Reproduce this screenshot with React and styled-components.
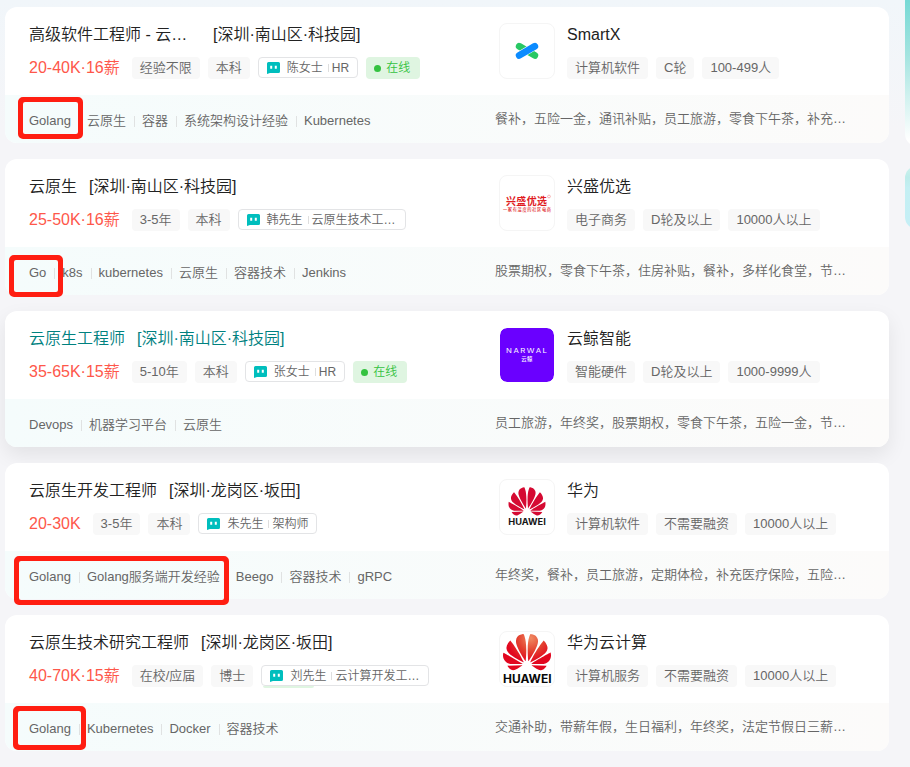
import React from 'react';
import styled, { createGlobalStyle, css } from 'styled-components';
import { SiHuawei } from 'react-icons/si';

const GlobalStyle = createGlobalStyle`
  * { box-sizing: border-box; }
  body {
    margin: 0;
    overflow: hidden;
    background: #f5f5f8;
    font-family: "Liberation Sans", "Noto Sans CJK SC", sans-serif;
    font-weight: 350;
  }
`;

const Page = styled.div`
  display: flex;
  gap: 16px;
  width: 910px;
  height: 767px;
  overflow: hidden;
  padding-left: 5px;
  background: linear-gradient(180deg, #f1f6fa 0, #f5f5f8 130px);
`;

const JobList = styled.main`
  display: flex;
  flex-direction: column;
  flex: 0 0 884px;
  gap: 16px;
  padding-top: 7px;
`;

const Card = styled.article`
  position: relative;
  flex: 0 0 136px;
  border-radius: 12px;
  background: #fff;
  ${(p) => p.$raised && css`box-shadow: 0 8px 20px rgba(0, 0, 0, 0.08);`}
`;

const CardBody = styled.div`
  display: grid;
  grid-template-columns: 470px 1fr;
  height: 88px;
  padding: 16px 24px 0;
`;

const JobTitle = styled.div`
  display: flex;
  gap: 12px;
  height: 22px;
  line-height: 24px;
  font-size: 16px;
  white-space: nowrap;
  color: ${(p) => (p.$active ? '#00817f' : '#222')};
`;

const JobName = styled.span`
  ${(p) => p.$clipped && css`width: 172px;`}
`;

const MetaRow = styled.div`
  display: flex;
  gap: 8px;
  margin-top: 12px;
  white-space: nowrap;
`;

const Salary = styled.span`
  margin-right: 4px;
  font-size: 16px;
  line-height: 22px;
  color: #fe574a;
`;

const Pill = styled.span`
  height: 22px;
  padding: 0 8px;
  border-radius: 4px;
  background: #f8f8f8;
  color: #666;
  font-size: 13px;
  line-height: 21px;
`;

const Recruiter = styled.span`
  position: relative;
  display: flex;
  align-items: center;
  height: 21px;
  padding: 0 8px;
  border: 1px solid #e3e4e6;
  border-radius: 4px;
  background: #fff;
  color: #666;
  font-size: 12px;
  line-height: 18px;

  svg { margin-right: 7px; }

  ${(p) => p.$shade && css`
    &::after {
      content: '';
      position: absolute;
      left: 1px;
      top: 20px;
      width: 51px;
      height: 1.5px;
      border-radius: 0 0 3px 3px;
      background: #dff5e1;
    }
  `}
`;

const RecruiterRole = styled.span`
  display: flex;
  align-items: center;
  margin-left: 5px;
  ${(p) => p.$clipped && css`width: 89px;`}

  &::before {
    content: '';
    width: 1px;
    height: 8px;
    margin-right: 3px;
    background: #dedede;
  }
`;

const Online = styled.span`
  display: flex;
  align-items: center;
  gap: 5px;
  height: 22px;
  padding: 0 10px 0 8px;
  border-radius: 4px;
  background: #dff5e1;
  color: #34c240;
  font-size: 12px;
  line-height: 20px;

  &::before {
    content: '';
    width: 7px;
    height: 7px;
    border-radius: 50%;
    background: #34c240;
  }
`;

const Company = styled.div`
  display: flex;
  gap: 12px;
`;

const LogoFrame = styled.div`
  width: 56px;
  height: 56px;
  overflow: hidden;
  border: 1px solid ${(p) => (p.$fill ? '#fff' : '#f5f5f5')};
  border-radius: 8px;
  background: ${(p) => p.$fill || '#fff'};
  background-clip: padding-box;

  svg { display: block; }
`;

const CompanyName = styled.div`
  height: 22px;
  font-size: 16px;
  line-height: 23px;
  color: #222;
`;

const CardFooter = styled.div`
  display: grid;
  grid-template-columns: 466px 1fr;
  height: 48px;
  padding: 0 24px;
  border-radius: 0 0 12px 12px;
  background: linear-gradient(90deg, #f5fcfc, #fcfbfa);
  color: #666;
  font-size: 13px;
  white-space: nowrap;
`;

const Skills = styled.div`
  display: flex;
  align-items: flex-start;
  padding-top: 16px;
  line-height: 20px;
`;

const Skill = styled.span`
  display: flex;
  align-items: center;

  & + &::before {
    content: '';
    width: 1px;
    height: 11px;
    margin: 0 7px 0 8px;
    background: #e0e2e2;
  }
`;

const Benefits = styled.div`
  padding-top: 14px;
  line-height: 20px;
`;

const Highlight = styled.div`
  position: absolute;
  left: ${(p) => p.$x}px;
  top: ${(p) => p.$y}px;
  width: ${(p) => p.$w}px;
  height: ${(p) => p.$h}px;
  border: 5px solid #ff1e12;
  border-radius: 5px;

  &::after {
    content: '';
    position: absolute;
    inset: -1px;
    border: 1px solid #ff1e12;
    border-radius: 3px;
  }
`;

const Sidebar = styled.aside`
  display: flex;
  flex-direction: column;
  flex: 0 0 200px;
  gap: 20px;
`;

const SidePanel = styled.div`
  height: 146px;
  border-radius: 0 0 12px 12px;
  background: linear-gradient(180deg, #76d9d5, #a4e4e0 38%, #fff 96%);
`;

const SideBanner = styled.div`
  height: 63px;
  border-radius: 12px;
  background: linear-gradient(180deg, #cdf2ed 0, #bdecea 18%, #c4eff3 35%, #c5eff6);
`;

const ChatIcon = () => (
  <svg width="13" height="12" viewBox="0 0 13 12">
    <path d="M1.5 0h10A1.5 1.5 0 0 1 13 1.5v8a1.5 1.5 0 0 1-1.5 1.5H3L0 12V1.5A1.5 1.5 0 0 1 1.5 0Z" fill="#00bebd" />
    <path d="M4.2 3.8v3M8.8 3.8v3" stroke="#fff" strokeWidth="2" />
  </svg>
);

const SmartXLogo = () => (
  <svg width="54" height="54" viewBox="0 0 54 54">
    <path d="M19.2 22.2 34.8 31.4" stroke="#28c864" strokeWidth="6.8" strokeLinecap="round" />
    <path d="M17.5 32.4 36.5 21.2" stroke="#fff" strokeWidth="7.8" />
    <path d="M19.2 31.4 34.8 22.2" stroke="#0b8bff" strokeWidth="6.8" strokeLinecap="round" />
  </svg>
);

const XingshengLogo = () => (
  <svg width="54" height="54" viewBox="0 0 54 54" fill="#e01b1f" fontFamily="Noto Sans CJK SC, sans-serif">
    <text x="6" y="28.7" fontSize="10" fontWeight="700" textLength="41">兴盛优选</text>
    <text x="3" y="35" fontSize="4.2" fontWeight="500" textLength="48">一家有温度的社区电商</text>
    <circle cx="49" cy="20.5" r="1.4" fill="none" stroke="#e88" strokeWidth=".6" />
  </svg>
);

const NarwalLogo = () => (
  <svg width="54" height="54" viewBox="0 0 54 54" fill="#fff">
    <text x="6" y="25" fontSize="5.6" fontWeight="400" letterSpacing="1.1" fontFamily="Inter, sans-serif" textLength="42.5" lengthAdjust="spacingAndGlyphs">NARWAL</text>
    <text x="21.3" y="33" fontSize="5.4" fontFamily="Noto Sans CJK SC, sans-serif" fontWeight="500" textLength="11">云鲸</text>
  </svg>
);

const HuaweiLogo = () => (
  <svg width="54" height="54" viewBox="0 0 54 54">
    <SiHuawei x="8.3" y="2.7" size={37.4} color="#d50a32" />
    <text x="8.3" y="45.1" fontSize="8.3" fontWeight="700" fontFamily="Inter, sans-serif" textLength="37.5" lengthAdjust="spacingAndGlyphs" fill="#171717">HUAWEI</text>
  </svg>
);

const HuaweiCloudLogo = () => (
  <svg width="54" height="54" viewBox="0 0 54 54">
    <defs>
      <radialGradient id="petals" gradientUnits="userSpaceOnUse" cx="14" cy="5" r="12">
        <stop offset="0" stopColor="#f08a62" />
        <stop offset="0.55" stopColor="#e3402f" />
        <stop offset="1" stopColor="#e2061f" />
      </radialGradient>
    </defs>
    <SiHuawei x="3" y="-3.9" size={48} fill="url(#petals)" />
    <text x="3" y="50.8" fontSize="11.2" fontWeight="700" fontFamily="Inter, sans-serif" textLength="48.5" lengthAdjust="spacingAndGlyphs" fill="#080808">HUAWEI</text>
  </svg>
);

const jobs = [
  {
    name: '高级软件工程师 - 云…', clipped: true, place: '[深圳·南山区·科技园]', salary: '20-40K·16薪',
    tags: ['经验不限', '本科'], person: '陈女士', role: 'HR', online: true,
    skills: ['Golang', '云原生', '容器', '系统架构设计经验', 'Kubernetes'],
    company: 'SmartX', Logo: SmartXLogo, info: ['计算机软件', 'C轮', '100-499人'],
    benefits: '餐补，五险一金，通讯补贴，员工旅游，零食下午茶，补充…',
    box: [13, 90, 65, 42],
  },
  {
    name: '云原生', place: '[深圳·南山区·科技园]', salary: '25-50K·16薪',
    tags: ['3-5年', '本科'], person: '韩先生', role: '云原生技术工…', roleClipped: true,
    skills: ['Go', 'k8s', 'kubernetes', '云原生', '容器技术', 'Jenkins'],
    company: '兴盛优选', Logo: XingshengLogo, info: ['电子商务', 'D轮及以上', '10000人以上'],
    benefits: '股票期权，零食下午茶，住房补贴，餐补，多样化食堂，节…',
    box: [4, 96, 54, 42],
  },
  {
    name: '云原生工程师', place: '[深圳·南山区·科技园]', salary: '35-65K·15薪', active: true,
    tags: ['5-10年', '本科'], person: '张女士', role: 'HR', online: true,
    skills: ['Devops', '机器学习平台', '云原生'],
    company: '云鲸智能', Logo: NarwalLogo, logoFill: '#6a00ff', info: ['智能硬件', 'D轮及以上', '1000-9999人'],
    benefits: '员工旅游，年终奖，股票期权，零食下午茶，五险一金，节…',
  },
  {
    name: '云原生开发工程师', place: '[深圳·龙岗区·坂田]', salary: '20-30K',
    tags: ['3-5年', '本科'], person: '朱先生', role: '架构师',
    skills: ['Golang', 'Golang服务端开发经验', 'Beego', '容器技术', 'gRPC'],
    company: '华为', Logo: HuaweiLogo, info: ['计算机软件', '不需要融资', '10000人以上'],
    benefits: '年终奖，餐补，员工旅游，定期体检，补充医疗保险，五险…',
    box: [9, 93, 215, 49],
  },
  {
    name: '云原生技术研究工程师', place: '[深圳·龙岗区·坂田]', salary: '40-70K·15薪',
    tags: ['在校/应届', '博士'], person: '刘先生', role: '云计算开发工…', roleClipped: true, shade: true,
    skills: ['Golang', 'Kubernetes', 'Docker', '容器技术'],
    company: '华为云计算', Logo: HuaweiCloudLogo, info: ['计算机服务', '不需要融资', '10000人以上'],
    benefits: '交通补助，带薪年假，生日福利，年终奖，法定节假日三薪…',
    box: [8, 91, 73, 44],
  },
];

function JobCard({ job }) {
  const { Logo, box } = job;
  return (
    <Card $raised={job.active}>
      <CardBody>
        <div>
          <JobTitle $active={job.active}>
            <JobName $clipped={job.clipped}>{job.name}</JobName>
            <span>{job.place}</span>
          </JobTitle>
          <MetaRow>
            <Salary>{job.salary}</Salary>
            {job.tags.map((t) => <Pill key={t}>{t}</Pill>)}
            <Recruiter $shade={job.shade}>
              <ChatIcon />
              {job.person}
              <RecruiterRole $clipped={job.roleClipped}>{job.role}</RecruiterRole>
            </Recruiter>
            {job.online && <Online>在线</Online>}
          </MetaRow>
        </div>
        <Company>
          <LogoFrame $fill={job.logoFill}><Logo /></LogoFrame>
          <div>
            <CompanyName>{job.company}</CompanyName>
            <MetaRow>
              {job.info.map((t) => <Pill key={t}>{t}</Pill>)}
            </MetaRow>
          </div>
        </Company>
      </CardBody>
      <CardFooter>
        <Skills>{job.skills.map((s) => <Skill key={s}>{s}</Skill>)}</Skills>
        <Benefits>{job.benefits}</Benefits>
      </CardFooter>
      {box && <Highlight $x={box[0]} $y={box[1]} $w={box[2]} $h={box[3]} />}
    </Card>
  );
}

export default function App() {
  return (
    <>
      <GlobalStyle />
      <Page>
        <JobList>{jobs.map((job) => <JobCard key={job.name} job={job} />)}</JobList>
        <Sidebar>
          <SidePanel />
          <SideBanner />
        </Sidebar>
      </Page>
    </>
  );
}
